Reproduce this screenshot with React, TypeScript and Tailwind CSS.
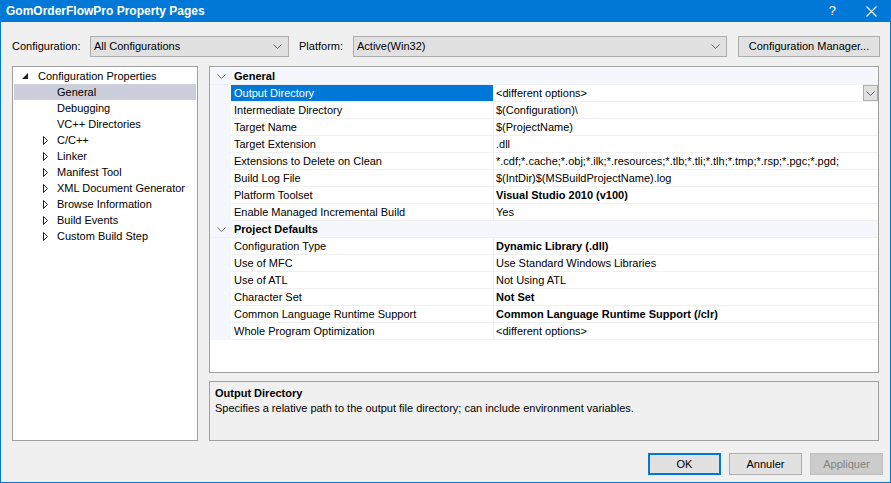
import React from "react";

const font = { fontFamily: '"Liberation Sans", Arial, sans-serif' };

function Chevron({ className = "" }: { className?: string }) {
  return (
    <svg width="9" height="5" viewBox="0 0 9 5" className={className} aria-hidden>
      <polyline points="0.5,0.5 4.5,4.5 8.5,0.5" fill="none" stroke="currentColor" strokeWidth="1" />
    </svg>
  );
}

function Combo({ value, width }: { value: string; width: string }) {
  return (
    <div
      className={`flex h-[21px] ${width} items-center justify-between border border-[#adadad] bg-[#e1e1e1] pl-[3px] pr-[6px] text-[11px] text-black`}
    >
      <span>{value}</span>
      <Chevron className="text-[#606060]" />
    </div>
  );
}

type TreeItem = { label: string; level: 0 | 1; kind: "open" | "closed" | "leaf"; selected?: boolean };

const tree: TreeItem[] = [
  { label: "Configuration Properties", level: 0, kind: "open" },
  { label: "General", level: 1, kind: "leaf", selected: true },
  { label: "Debugging", level: 1, kind: "leaf" },
  { label: "VC++ Directories", level: 1, kind: "leaf" },
  { label: "C/C++", level: 1, kind: "closed" },
  { label: "Linker", level: 1, kind: "closed" },
  { label: "Manifest Tool", level: 1, kind: "closed" },
  { label: "XML Document Generator", level: 1, kind: "closed" },
  { label: "Browse Information", level: 1, kind: "closed" },
  { label: "Build Events", level: 1, kind: "closed" },
  { label: "Custom Build Step", level: 1, kind: "closed" },
];

function TreeRow({ item }: { item: TreeItem }) {
  return (
    <div
      className={`flex h-4 items-center text-[11px] text-black ${item.selected ? "bg-[#cccedb]" : ""}`}
    >
      {item.level === 0 ? (
        <>
          <span className="ml-[8px] flex w-[16px] items-center">
            <svg width="6" height="6" viewBox="0 0 6 6" aria-hidden>
              <polygon points="6,0 6,6 0,6" fill="#1e1e1e" />
            </svg>
          </span>
          <span>{item.label}</span>
        </>
      ) : (
        <>
          <span className="ml-[29px] flex w-[14px] items-center">
            {item.kind === "closed" && (
              <svg width="5" height="9" viewBox="0 0 5 9" aria-hidden>
                <polygon points="0.5,0.5 4.5,4.5 0.5,8.5" fill="none" stroke="#1e1e1e" strokeWidth="1" />
              </svg>
            )}
          </span>
          <span>{item.label}</span>
        </>
      )}
    </div>
  );
}

type Prop = { name: string; value: string; bold?: boolean; selected?: boolean };

const general: Prop[] = [
  { name: "Output Directory", value: "<different options>", selected: true },
  { name: "Intermediate Directory", value: "$(Configuration)\\" },
  { name: "Target Name", value: "$(ProjectName)" },
  { name: "Target Extension", value: ".dll" },
  {
    name: "Extensions to Delete on Clean",
    value: "*.cdf;*.cache;*.obj;*.ilk;*.resources;*.tlb;*.tli;*.tlh;*.tmp;*.rsp;*.pgc;*.pgd;",
  },
  { name: "Build Log File", value: "$(IntDir)$(MSBuildProjectName).log" },
  { name: "Platform Toolset", value: "Visual Studio 2010 (v100)", bold: true },
  { name: "Enable Managed Incremental Build", value: "Yes" },
];

const defaults: Prop[] = [
  { name: "Configuration Type", value: "Dynamic Library (.dll)", bold: true },
  { name: "Use of MFC", value: "Use Standard Windows Libraries" },
  { name: "Use of ATL", value: "Not Using ATL" },
  { name: "Character Set", value: "Not Set", bold: true },
  { name: "Common Language Runtime Support", value: "Common Language Runtime Support (/clr)", bold: true },
  { name: "Whole Program Optimization", value: "<different options>" },
];

function Category({ title }: { title: string }) {
  return (
    <div className="flex h-[17px] items-center border-b border-[#f0f0f0] bg-[#f4f7fc] text-[11px]">
      <span className="flex w-[22px] justify-center">
        <Chevron className="text-[#717171]" />
      </span>
      <span className="pl-[2px] font-bold text-black">{title}</span>
    </div>
  );
}

function PropRow({ p }: { p: Prop }) {
  return (
    <div className="flex h-[17px] text-[11px]">
      <div className="w-[21px] shrink-0 bg-[#f4f7fc]" />
      <div
        className={`flex w-[262px] shrink-0 items-center border-b border-[#f0f0f0] pl-[3px] ${
          p.selected ? "bg-[#0078d7] text-white" : "bg-white text-black"
        }`}
      >
        {p.name}
      </div>
      <div className="relative flex min-w-0 flex-1 items-center overflow-hidden whitespace-nowrap border-b border-l border-[#f0f0f0] bg-white pl-[2px] text-black">
        <span className={p.bold ? "font-bold" : ""}>{p.value}</span>
        {p.selected && (
          <span className="absolute right-0 top-0 flex h-[16px] w-[15px] items-center justify-center border border-[#adadad] bg-[#e1e1e1]">
            <Chevron className="text-[#606060]" />
          </span>
        )}
      </div>
    </div>
  );
}

function Button({ label, primary, disabled }: { label: string; primary?: boolean; disabled?: boolean }) {
  return (
    <div
      className={`flex h-[22px] w-[73px] items-center justify-center text-[11px] ${
        primary
          ? "border-2 border-[#0078d7] bg-[#e1e1e1] text-black"
          : disabled
            ? "border border-[#bfbfbf] bg-[#cccccc] text-[#838383]"
            : "border border-[#adadad] bg-[#e1e1e1] text-black"
      }`}
    >
      {label}
    </div>
  );
}

export default function App() {
  return (
    <div
      style={font}
      className="flex h-[483px] w-[891px] flex-col border border-t-0 border-[#0078d7] bg-[#f0f0f0]"
    >
      <div className="-mx-px flex h-[22px] shrink-0 items-center justify-between bg-[#0078d7] pl-[6px] text-white">
        <span className="text-[12px] font-bold">GomOrderFlowPro Property Pages</span>
        <div className="flex items-center">
          <span className="mr-[30px] text-[13px]">?</span>
          <svg width="11" height="11" viewBox="0 0 11 11" className="mr-[14px]" aria-hidden>
            <path d="M0.5 0.5 L10.5 10.5 M10.5 0.5 L0.5 10.5" stroke="white" strokeWidth="1.1" />
          </svg>
        </div>
      </div>

      <div className="mt-[14px] flex h-[21px] items-center pl-[11px] text-[11px] text-black">
        <span className="w-[78px]">Configuration:</span>
        <Combo value="All Configurations" width="w-[199px]" />
        <span className="ml-[10px] w-[54px]">Platform:</span>
        <Combo value="Active(Win32)" width="w-[374px]" />
        <div className="ml-[11px] flex h-[21px] w-[142px] items-center justify-center border border-[#adadad] bg-[#e1e1e1]">
          Configuration Manager...
        </div>
      </div>

      <div className="mt-[9px] flex pl-[11px]">
        <div className="h-[375px] w-[186px] border border-[#a0a0a0] bg-white px-px pt-[1px]">
          {tree.map((item) => (
            <TreeRow key={item.label} item={item} />
          ))}
        </div>

        <div className="ml-[11px] flex w-[670px] flex-col">
          <div className="h-[307px] overflow-hidden border border-[#a0a0a0] bg-white pt-[1px]">
            <Category title="General" />
            {general.map((p) => (
              <PropRow key={p.name} p={p} />
            ))}
            <Category title="Project Defaults" />
            {defaults.map((p) => (
              <PropRow key={p.name} p={p} />
            ))}
          </div>
          <div className="mt-[8px] h-[60px] border border-[#a0a0a0] bg-[#f0f0f0] px-[5px] pt-[4px] text-[11px] text-black">
            <div className="font-bold leading-[15px]">Output Directory</div>
            <div className="leading-[15px]">
              Specifies a relative path to the output file directory; can include environment variables.
            </div>
          </div>
        </div>
      </div>

      <div className="mt-[12px] flex justify-end gap-[8px] pr-[7px]">
        <Button label="OK" primary />
        <Button label="Annuler" />
        <Button label="Appliquer" disabled />
      </div>
    </div>
  );
}
